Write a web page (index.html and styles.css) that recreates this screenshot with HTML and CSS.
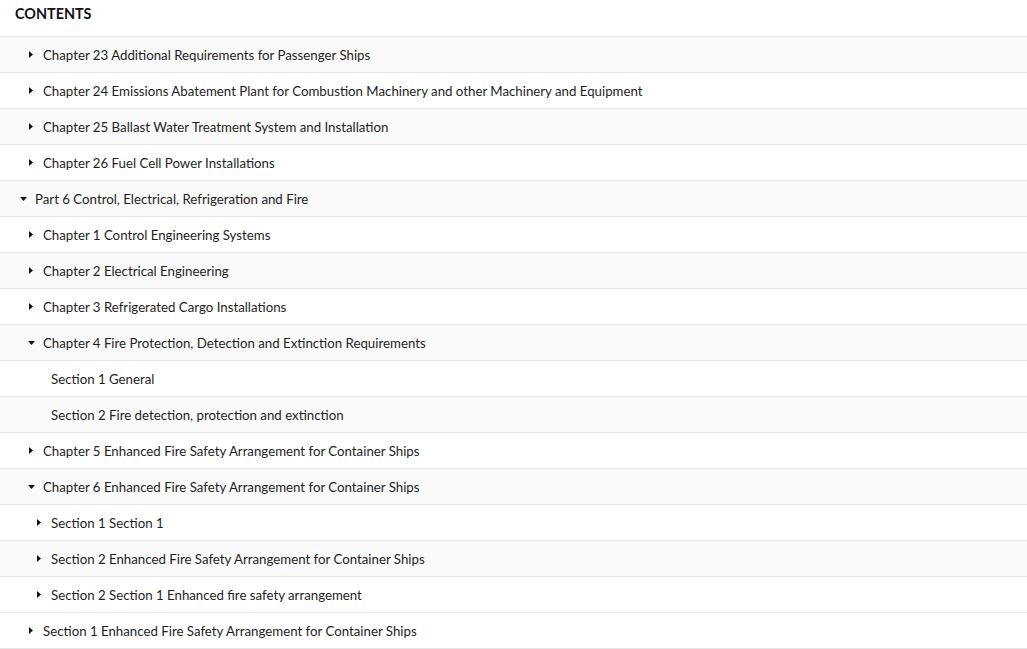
FILE: index.html
```html
<!DOCTYPE html>
<html lang="en">
<head>
<meta charset="utf-8">
<title>Contents</title>
<link rel="stylesheet" href="styles.css">
</head>
<body>
<div class="toc">
  <h2 class="toc-title">CONTENTS</h2>
  <ul class="toc-list">
    <li class="row alt l1"><span class="tog"><svg class="tri-r" viewBox="0 0 4 7"><polygon points="0,0 4,3.5 0,7"/></svg></span><span class="label">Chapter 23 Additional Requirements for Passenger Ships</span></li>
    <li class="row l1"><span class="tog"><svg class="tri-r" viewBox="0 0 4 7"><polygon points="0,0 4,3.5 0,7"/></svg></span><span class="label">Chapter 24 Emissions Abatement Plant for Combustion Machinery and other Machinery and Equipment</span></li>
    <li class="row alt l1"><span class="tog"><svg class="tri-r" viewBox="0 0 4 7"><polygon points="0,0 4,3.5 0,7"/></svg></span><span class="label">Chapter 25 Ballast Water Treatment System and Installation</span></li>
    <li class="row l1"><span class="tog"><svg class="tri-r" viewBox="0 0 4 7"><polygon points="0,0 4,3.5 0,7"/></svg></span><span class="label">Chapter 26 Fuel Cell Power Installations</span></li>
    <li class="row alt l0"><span class="tog"><svg class="tri-d" viewBox="0 0 7 4"><polygon points="0,0 7,0 3.5,4"/></svg></span><span class="label">Part 6 Control, Electrical, Refrigeration and Fire</span></li>
    <li class="row l1"><span class="tog"><svg class="tri-r" viewBox="0 0 4 7"><polygon points="0,0 4,3.5 0,7"/></svg></span><span class="label">Chapter 1 Control Engineering Systems</span></li>
    <li class="row alt l1"><span class="tog"><svg class="tri-r" viewBox="0 0 4 7"><polygon points="0,0 4,3.5 0,7"/></svg></span><span class="label">Chapter 2 Electrical Engineering</span></li>
    <li class="row l1"><span class="tog"><svg class="tri-r" viewBox="0 0 4 7"><polygon points="0,0 4,3.5 0,7"/></svg></span><span class="label">Chapter 3 Refrigerated Cargo Installations</span></li>
    <li class="row alt l1"><span class="tog"><svg class="tri-d" viewBox="0 0 7 4"><polygon points="0,0 7,0 3.5,4"/></svg></span><span class="label">Chapter 4 Fire Protection, Detection and Extinction Requirements</span></li>
    <li class="row l2"><span class="tog"></span><span class="label">Section 1 General</span></li>
    <li class="row alt l2"><span class="tog"></span><span class="label">Section 2 Fire detection, protection and extinction</span></li>
    <li class="row l1"><span class="tog"><svg class="tri-r" viewBox="0 0 4 7"><polygon points="0,0 4,3.5 0,7"/></svg></span><span class="label">Chapter 5 Enhanced Fire Safety Arrangement for Container Ships</span></li>
    <li class="row alt l1"><span class="tog"><svg class="tri-d" viewBox="0 0 7 4"><polygon points="0,0 7,0 3.5,4"/></svg></span><span class="label">Chapter 6 Enhanced Fire Safety Arrangement for Container Ships</span></li>
    <li class="row l2"><span class="tog"><svg class="tri-r" viewBox="0 0 4 7"><polygon points="0,0 4,3.5 0,7"/></svg></span><span class="label">Section 1 Section 1</span></li>
    <li class="row alt l2"><span class="tog"><svg class="tri-r" viewBox="0 0 4 7"><polygon points="0,0 4,3.5 0,7"/></svg></span><span class="label">Section 2 Enhanced Fire Safety Arrangement for Container Ships</span></li>
    <li class="row l2"><span class="tog"><svg class="tri-r" viewBox="0 0 4 7"><polygon points="0,0 4,3.5 0,7"/></svg></span><span class="label">Section 2 Section 1 Enhanced fire safety arrangement</span></li>
    <li class="row l1"><span class="tog"><svg class="tri-r" viewBox="0 0 4 7"><polygon points="0,0 4,3.5 0,7"/></svg></span><span class="label">Section 1 Enhanced Fire Safety Arrangement for Container Ships</span></li>
  </ul>
</div>
</body>
</html>
```

FILE: styles.css
```css
html, body {
  margin: 0;
  padding: 0;
  background: #ffffff;
}
body {
  font-family: "Lato", "Liberation Sans", sans-serif;
  font-size: 13.25px;
  color: #1e1e1e;
}
.toc-title {
  margin: 0;
  height: 37px;
  box-sizing: border-box;
  padding: 5px 0 0 15px;
  font-size: 14.4px;
  font-weight: 700;
  color: #111111;
  line-height: 18px;
  border-bottom: 1px solid #e6e6e6;
}
.toc-list {
  list-style: none;
  margin: 0;
  padding: 0;
}
.row {
  display: flex;
  align-items: center;
  height: 36px;
  box-sizing: border-box;
  border-bottom: 1px solid #e6e6e6;
  background: #ffffff;
}
.row.alt {
  background: #fafafa;
}
.l0 { padding-left: 15px; }
.l1 { padding-left: 23px; }
.l2 { padding-left: 31px; }
.tog {
  width: 16px;
  margin-right: 4px;
  display: flex;
  justify-content: center;
  align-items: center;
  flex: none;
}
.tri-r {
  width: 4px;
  height: 7px;
  fill: #111111;
  display: block;
}
.tri-d {
  width: 7px;
  height: 4px;
  fill: #111111;
  display: block;
}
.label {
  white-space: nowrap;
  line-height: 18px;
}
```
